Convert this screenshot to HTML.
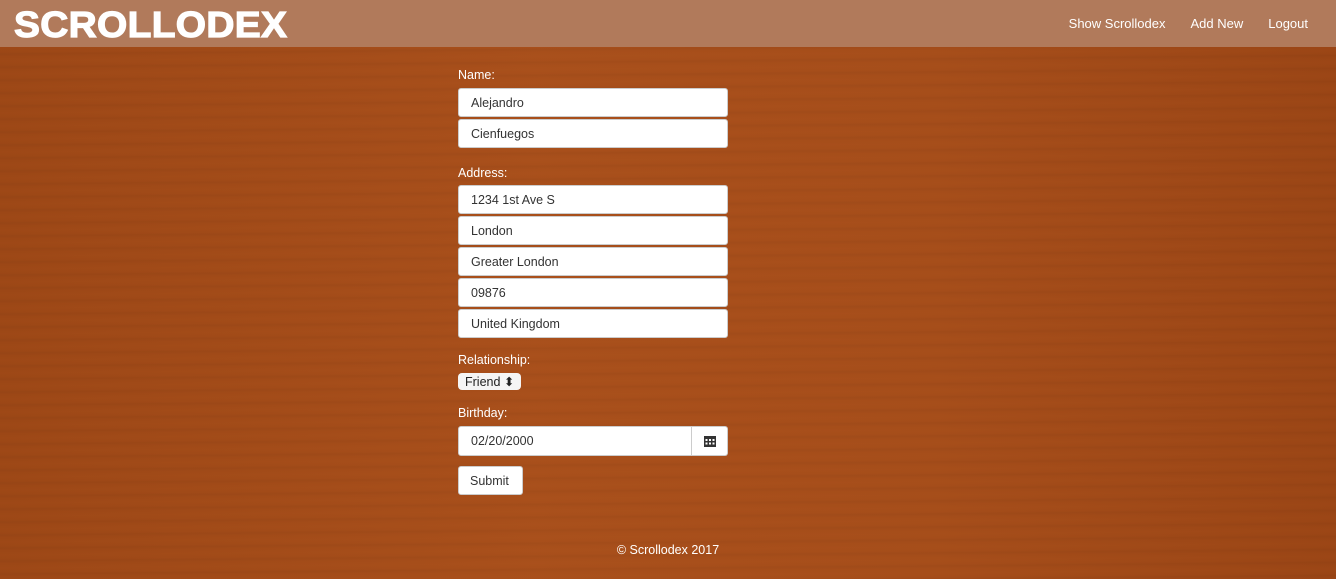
<!DOCTYPE html>
<html><head><style>
*{box-sizing:border-box}
body{margin:0;width:1336px;height:579px;overflow:hidden;font-family:"Liberation Sans",sans-serif;
background:#a14a17;
background-image:repeating-linear-gradient(179.5deg,rgba(0,0,0,0) 0px,rgba(0,0,0,0.03) 2px,rgba(0,0,0,0) 5px,rgba(255,140,60,0.02) 9px,rgba(0,0,0,0) 13px),linear-gradient(90deg,#9c4716,#a84f1b 40%,#a54d1a 70%,#9a4515);
position:relative}
.nav{position:absolute;left:0;top:0;width:1336px;height:47px;background:#b17a5b}
.logo{position:absolute;left:14px;top:4px;color:#fff;font-weight:bold;font-size:36px;letter-spacing:0.3px;-webkit-text-stroke:1.2px #fff;transform:scaleX(1.08);transform-origin:left}
.links{position:absolute;right:28px;top:16px;color:#fff;font-size:13px}
.links span{margin-left:25px}
.form{position:absolute;left:458px;top:68px;width:270px}
label{display:block;color:#fff;font-size:12.5px;height:20px}
.in{height:29px;background:#fff;border:1px solid #ccc;border-radius:3px;margin-bottom:2px;font-size:12.5px;color:#333;padding:7px 12px}
.sel{display:inline-block;height:17px;background:#f5f5f5;border-radius:4px;font-size:12.5px;padding:1px 7px;color:#222;margin-bottom:16px}
.foot{position:absolute;left:0;width:1336px;top:543px;text-align:center;color:#fff;font-size:12.5px}
</style></head><body>
<div class="nav"><div class="logo">SCROLLODEX</div>
<div class="links"><span>Show Scrollodex</span><span>Add New</span><span>Logout</span></div></div>
<div class="form">
<label>Name:</label>
<div class="in">Alejandro</div><div class="in">Cienfuegos</div>
<div style="height:16px"></div>
<label style="height:19px">Address:</label>
<div class="in">1234 1st Ave S</div><div class="in">London</div><div class="in">Greater London</div><div class="in">09876</div><div class="in">United Kingdom</div>
<div style="height:13px"></div>
<label style="height:20px">Relationship:</label>
<div class="sel">Friend ⬍</div>
<label>Birthday:</label>
<div style="display:flex;height:30px;margin-bottom:10px"><div class="in" style="flex:1;border-radius:3px 0 0 3px;height:30px">02/20/2000</div><div style="width:36px;height:30px;background:#fff;border:1px solid #ccc;border-left:none;border-radius:0 3px 3px 0;display:flex;align-items:center;justify-content:center"><svg width="12" height="12"><rect x="0" y="1" width="12" height="11" fill="#333"/><g fill="#fff"><rect x="1.5" y="4" width="2" height="2"/><rect x="5" y="4" width="2" height="2"/><rect x="8.5" y="4" width="2" height="2"/><rect x="1.5" y="7.5" width="2" height="2"/><rect x="5" y="7.5" width="2" height="2"/><rect x="8.5" y="7.5" width="2" height="2"/></g></svg></div></div>
<div class="in" style="display:inline-block;width:65px;height:29px;padding:7px 11px">Submit</div>
</div>
<div class="foot">© Scrollodex 2017</div>
</body></html>
